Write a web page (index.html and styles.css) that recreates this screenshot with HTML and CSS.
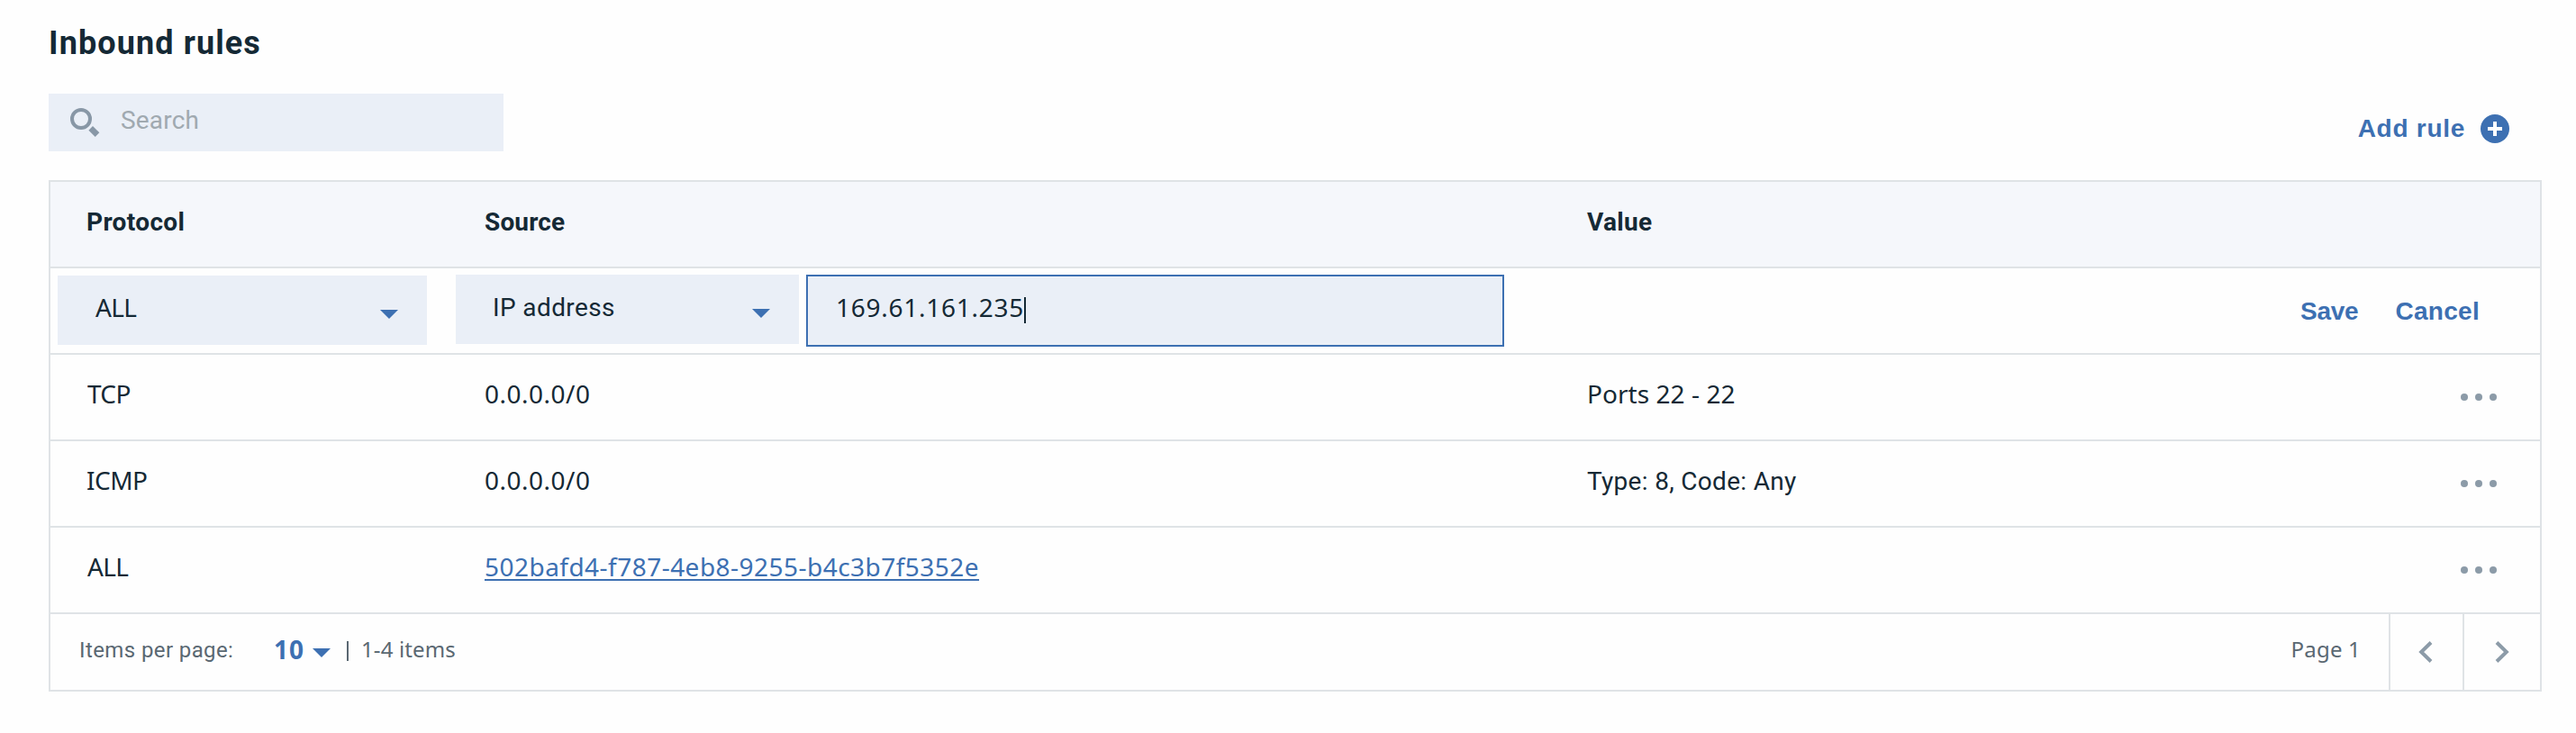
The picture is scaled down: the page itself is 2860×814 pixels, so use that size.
FILE: index.html
```
<!DOCTYPE html>
<html lang="en">
<head>
<meta charset="utf-8">
<title>Inbound rules</title>
<link rel="stylesheet" href="styles.css">
</head>
<body>
<main class="page">
  <h1 class="title">Inbound rules</h1>
  <div class="toolbar">
    <div class="search">
      <svg class="search-icon" width="32" height="32" viewBox="0 0 32 32"><circle cx="12" cy="12" r="10" fill="none" stroke="#8897a6" stroke-width="4"/><path d="M25 20l7.3 7.3-4.6 4.7-7.3-7.3z" fill="#8897a6"/></svg>
      <span class="search-text">Search</span>
    </div>
    <div class="add-rule">
      <span class="add-label">Add rule</span>
      <svg width="32" height="32" viewBox="0 0 32 32"><circle cx="16" cy="16" r="16" fill="#3d70b2"/><path d="M8 16h16M16 8v16" stroke="#fff" stroke-width="4"/></svg>
    </div>
  </div>
  <section class="table">
    <div class="row head">
      <span class="t-protocol">Protocol</span><span class="t-source">Source</span><span class="t-value">Value</span>
    </div>
    <div class="edit-row">
      <div class="select select-protocol"><span class="caps">ALL</span><svg class="caret" width="20" height="10" viewBox="0 0 20 10"><path d="M0 0h20L10 10z"/></svg></div>
      <div class="select select-source"><span class="t-ip">IP address</span><svg class="caret" width="20" height="10" viewBox="0 0 20 10"><path d="M0 0h20L10 10z"/></svg></div>
      <div class="field"><span class="digits">169.61.161.235</span><i class="cursor"></i></div>
      <div class="actions"><span class="save">Save</span><span class="cancel">Cancel</span></div>
    </div>
    <div class="row">
      <span class="caps">TCP</span><span class="cidr">0.0.0.0/0</span><span class="t-ports">Ports 22 - 22</span>
      <svg class="dots" width="40" height="8" viewBox="0 0 40 8"><circle cx="4" cy="4" r="4"/><circle cx="20" cy="4" r="4"/><circle cx="36" cy="4" r="4"/></svg>
    </div>
    <div class="row">
      <span class="t-icmp">ICMP</span><span class="cidr">0.0.0.0/0</span><span class="t-type">Type: 8, Code: Any</span>
      <svg class="dots" width="40" height="8" viewBox="0 0 40 8"><circle cx="4" cy="4" r="4"/><circle cx="20" cy="4" r="4"/><circle cx="36" cy="4" r="4"/></svg>
    </div>
    <div class="row">
      <span class="caps">ALL</span><span class="link-cell"><a class="link">502bafd4-f787-4eb8-9255-b4c3b7f5352e</a></span><span></span>
      <svg class="dots" width="40" height="8" viewBox="0 0 40 8"><circle cx="4" cy="4" r="4"/><circle cx="20" cy="4" r="4"/><circle cx="36" cy="4" r="4"/></svg>
    </div>
    <div class="footer">
      <span class="per-page">Items per page:</span>
      <span class="count">10</span>
      <svg class="caret" width="20" height="10" viewBox="0 0 20 10"><path d="M0 0h20L10 10z"/></svg>
      <i class="bar"></i>
      <span class="range">1-4 items</span>
      <span class="page-no">Page 1</span>
      <div class="pager"><svg width="16" height="24" viewBox="0 0 16 24"><path d="M14 1.5L3.2 12 14 22.5"/></svg></div>
      <div class="pager next"><svg width="16" height="24" viewBox="0 0 16 24"><path d="M2 1.5L12.8 12 2 22.5"/></svg></div>
    </div>
  </section>
</main>
</body>
</html>
```

FILE: styles.css
```
* { box-sizing: border-box; }
body { margin: 0; background: #fefefe; color: #152935; font: 28px/32px Roboto, "Noto Sans", sans-serif; white-space: nowrap; }
svg { display: block; flex: none; }
.page { padding: 27px 38px 0 54px; }
.title { margin: 0 0 35px; font-size: 36px; line-height: 42px; font-weight: 700; letter-spacing: 1.1px; }

.toolbar { display: flex; justify-content: space-between; height: 64px; margin-bottom: 32px; }
.search { display: flex; align-items: flex-start; width: 505px; height: 64px; padding: 14px 0 0 24px; background: #eaeff7; }
.search-icon { margin-top: 2px; overflow: visible; }
.search-text { margin-left: 24px; color: #a0a9b0; letter-spacing: .2px; }
.add-rule { display: flex; align-items: center; gap: 17px; margin-right: 36px; padding-top: 14px; color: #3d70b2; }
.add-label, .actions { font-family: "Liberation Sans", Arial, sans-serif; font-weight: 700; color: #3d70b2; }
.add-label { letter-spacing: .72px; }

.table { border: 2px solid #dfe3e6; }
.row { display: grid; grid-template-columns: 442px 1224px 1fr auto; align-items: center; height: 96px; padding: 0 48px 5px 40px; border-bottom: 2px solid #dfe3e6; }
.head { background: #f5f7fb; font-weight: 700; }
.t-protocol { letter-spacing: .36px; }
.t-source { letter-spacing: .14px; }
.t-value { letter-spacing: .31px; }
.caps, .digits, .cidr, .t-icmp, .t-ports, .link-cell, .range, .page-no, .count { font-family: "Noto Sans", sans-serif; }
.row .caps, .cidr, .t-icmp, .t-ports, .link-cell { padding-bottom: 3px; }
.caps { letter-spacing: -.65px; padding-left: 1px; }
.t-icmp { letter-spacing: -.53px; }
.cidr { letter-spacing: .5px; }
.t-ports { letter-spacing: .05px; }
.t-type { letter-spacing: .31px; }
.link { color: #3d70b2; letter-spacing: .47px; text-decoration: underline; text-decoration-thickness: 2px; text-underline-offset: 3px; text-decoration-skip-ink: none; }
.dots { fill: #8c9ba8; margin-top: 4px; }
.caret { fill: #3d70b2; }

.edit-row { display: flex; align-items: flex-start; height: 96px; padding: 7px 0 0 8px; border-bottom: 2px solid #dfe3e6; }
.select { display: flex; justify-content: space-between; align-items: flex-start; height: 77px; background: #eaeff7; }
.select-protocol { width: 410px; margin: 1px 32px 0 0; padding: 19px 32px 0 41px; }
.select-protocol .caret { margin-top: 19px; }
.select-source { width: 381px; margin-right: 8px; padding: 21px 32px 0 41px; }
.select-source .caret { margin-top: 17px; }
.t-ip { letter-spacing: .38px; }
.field { display: flex; width: 775px; height: 80px; padding: 18px 0 0 31px; background: #eaeff7; border: 2px solid #3d70b2; }
.digits { letter-spacing: .74px; }
.cursor { width: 2px; height: 29px; margin-top: 5px; background: #152935; }
.actions { display: flex; align-self: flex-start; gap: 41px; margin: 25px 67px 0 auto; }
.save { letter-spacing: -.27px; }
.cancel { letter-spacing: .3px; }

.footer { display: flex; align-items: center; height: 84px; padding-left: 32px; color: #5a6872; font-size: 24px; }
.footer > span { padding-bottom: 4px; }
.per-page { width: 216px; letter-spacing: .4px; }
.count { width: 43px; color: #3d70b2; font-size: 28px; font-weight: 700; letter-spacing: .98px; }
.footer .caret { margin-top: 2px; }
.bar { width: 2px; height: 22px; margin: 0 14px 3px 18px; background: #5a6872; }
.footer .range, .footer .page-no, .footer .count { padding-bottom: 6px; }
.range { letter-spacing: .12px; }
.page-no { margin-left: auto; margin-right: 31px; letter-spacing: .2px; }
.pager { display: flex; align-items: center; width: 82px; height: 84px; padding-left: 31px; border-left: 2px solid #dfe3e6; }
.next { width: 86px; padding-left: 34px; }
.pager path { fill: none; stroke: #8c9ba8; stroke-width: 4; }
```
